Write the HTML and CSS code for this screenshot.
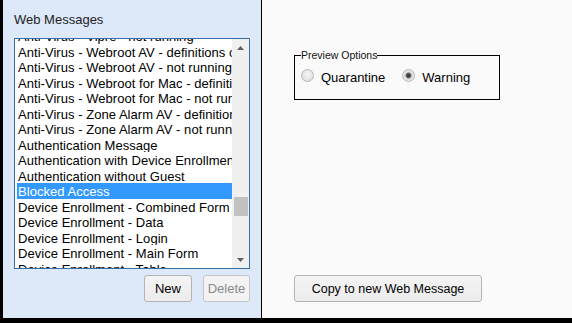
FILE: index.html
```html
<!DOCTYPE html>
<html lang="en">
  <head>
    <meta charset="UTF-8" />
    <title>Web Messages</title>
    <link rel="stylesheet" href="styles.css">
  </head>
  <body>
    <div class="app">
      <div class="left">
        <div class="title">Web Messages</div>
        <div class="listbox">
          <div class="rows">
            <div class="rows-inner">
              <div class="row">Anti-Virus - Vipre - not running</div>
              <div class="row">Anti-Virus - Webroot AV - definitions out of date</div>
              <div class="row">Anti-Virus - Webroot AV - not running</div>
              <div class="row">Anti-Virus - Webroot for Mac - definitions out of date</div>
              <div class="row">Anti-Virus - Webroot for Mac - not running</div>
              <div class="row">Anti-Virus - Zone Alarm AV - definitions out of date</div>
              <div class="row">Anti-Virus - Zone Alarm AV - not running</div>
              <div class="row">Authentication Message</div>
              <div class="row">Authentication with Device Enrollment</div>
              <div class="row">Authentication without Guest</div>
              <div class="row selected">Blocked Access</div>
              <div class="row">Device Enrollment - Combined Form</div>
              <div class="row">Device Enrollment - Data</div>
              <div class="row">Device Enrollment - Login</div>
              <div class="row">Device Enrollment - Main Form</div>
              <div class="row">Device Enrollment - Table</div>
            </div>
          </div>
          <div class="scrollbar">
            <div class="arrow">
              <svg width="7" height="4" viewBox="0 0 7 4"><path d="M0 4 L3.5 0 L7 4 Z" fill="#606060"/></svg>
            </div>
            <div class="track"><div class="thumb"></div></div>
            <div class="arrow">
              <svg width="7" height="4" viewBox="0 0 7 4"><path d="M0 0 L7 0 L3.5 4 Z" fill="#606060"/></svg>
            </div>
          </div>
        </div>
        <div class="actions">
          <button class="btn btn-new">New</button>
          <button class="btn btn-delete" disabled>Delete</button>
        </div>
      </div>
      <div class="right">
        <fieldset class="preview">
          <legend>Preview Options</legend>
          <div class="options">
            <label class="option"><input type="radio" name="preview" class="radio" />Quarantine</label>
            <label class="option"><input type="radio" name="preview" class="radio" checked />Warning</label>
          </div>
        </fieldset>
        <button class="btn btn-copy">Copy to new Web Message</button>
      </div>
    </div>
  </body>
</html>
```

FILE: styles.css
```css
* {
  margin: 0;
  padding: 0;
  box-sizing: border-box;
}
body {
  background-color: #000;
  font: 13px "Liberation Sans", Arial, sans-serif;
  color: #000;
  width: 572px;
  height: 323px;
  overflow: hidden;
}

.app {
  display: flex;
  height: 318px;
  margin-left: 3px;
}

.left {
  width: 258px;
  background-color: #dde9f8;
  padding: 12px 11px 16px 11px;
  display: flex;
  flex-direction: column;
}

.title {
  line-height: 15px;
  color: #222;
  margin-bottom: 11px;
}

.listbox {
  height: 231px;
  border: 1px solid #3a6ea8;
  background-color: #fff;
  display: flex;
  padding-left: 2px;
}

.rows {
  flex: 1;
  overflow: hidden;
}

.rows-inner {
  margin-top: -11px;
}

.row {
  height: 15.5px;
  line-height: 15.5px;
  padding-left: 1px;
  padding-top: 1px;
  letter-spacing: 0.04px;
  white-space: nowrap;
  overflow: hidden;
}

.row.selected {
  background-color: #3399ff;
  color: #fff;
}

.scrollbar {
  width: 17px;
  background-color: #f0f0f0;
  display: flex;
  flex-direction: column;
}

.arrow {
  height: 17px;
  display: flex;
  align-items: center;
  justify-content: center;
}

.track {
  flex: 1;
  padding: 0 1px 0 2px;
}

.thumb {
  margin-top: 141px;
  height: 19px;
  background-color: #c1c1c1;
}

.actions {
  display: flex;
  justify-content: flex-end;
  gap: 11px;
  margin-top: 6px;
}

.btn {
  height: 27px;
  border: 1px solid #b4b4b4;
  border-radius: 3px;
  background: linear-gradient(#f4f4f4, #ececec);
  font: 13px "Liberation Sans", Arial, sans-serif;
  color: #000;
}

.btn-new {
  width: 48px;
}

.btn-delete {
  width: 47px;
  color: #8a8a8a;
  border-color: #c6c6c6;
  background: #f3f3f3;
}

.right {
  flex: 1;
  margin-left: 1px;
  background-color: #fafafa;
  padding: 49px 0 16px 32px;
  display: flex;
  flex-direction: column;
  align-items: flex-start;
}

.preview {
  width: 206px;
  border: 1px solid #000;
  padding: 8px 6px 14px 6px;
}

.preview legend {
  font-size: 10.5px;
  line-height: 12px;
  padding: 0;
  color: #111;
}

.options {
  display: flex;
  gap: 17px;
}

.option {
  display: flex;
  align-items: center;
  height: 16px;
  gap: 7px;
}

.radio {
  appearance: none;
  width: 13px;
  height: 13px;
  margin-bottom: 4px;
  border: 1px solid #b9b9b9;
  border-radius: 50%;
  background: radial-gradient(circle at 50% 40%, #f6f6f6, #d8d8d8);
}

.radio:checked {
  background: radial-gradient(circle, #3c3c3c 0 1.5px, #7a7a7a 2.5px, #dcdcdc 3.5px, #e6e6e6 5px, #d4d4d4);
}

.btn-copy {
  margin-top: auto;
  width: 188px;
  font-size: 12.5px;
}
```
